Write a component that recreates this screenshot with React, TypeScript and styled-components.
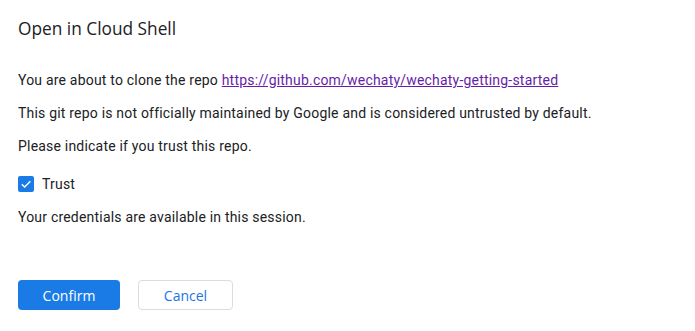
import React, { useState } from "react";
import styled, { createGlobalStyle } from "styled-components";

const Global = createGlobalStyle`
  html, body { margin: 0; padding: 0; background: #ffffff; }
  body { font-family: Roboto, "Liberation Sans", Arial, sans-serif; color: #202124; }
`;

const Dialog = styled.div`
  width: 695px;
  height: 331px;
  box-sizing: border-box;
  padding: 17px 18px 0 18px;
  display: flex;
  flex-direction: column;
`;

const Title = styled.h1`
  margin: 0;
  font-family: "Open Sans", Roboto, sans-serif;
  font-weight: 400;
  font-size: 17.3px;
  line-height: 24px;
  color: #202124;
`;

const Text = styled.p<{ $top: number }>`
  margin: ${(p) => p.$top}px 0 0 0;
  font-size: 14px;
  letter-spacing: 0.2px;
  line-height: 20px;
  color: #202124;
`;

const Link = styled.a`
  color: #681da8;
  text-decoration: underline;
`;

const CheckRow = styled.label`
  margin-top: 18px;
  display: flex;
  align-items: center;
  gap: 8px;
  height: 20px;
  font-size: 14px;
  letter-spacing: 0.2px;
  color: #202124;
  cursor: pointer;
`;

const Box = styled.span<{ $on: boolean }>`
  width: 16px;
  height: 16px;
  border-radius: 2px;
  box-sizing: border-box;
  background: ${(p) => (p.$on ? "#1a7be6" : "#fff")};
  border: ${(p) => (p.$on ? "none" : "2px solid #5f6368")};
  display: flex;
  align-items: center;
  justify-content: center;
`;

const Actions = styled.div`
  margin-top: 53px;
  display: flex;
  gap: 18px;
`;

const Button = styled.button<{ $primary?: boolean }>`
  height: 30px;
  box-sizing: border-box;
  border-radius: 4px;
  font-family: "Open Sans", Roboto, sans-serif;
  font-size: 14px;
  font-weight: 500;
  cursor: pointer;
  background: ${(p) => (p.$primary ? "#1a7be6" : "#ffffff")};
  color: ${(p) => (p.$primary ? "#ffffff" : "#1a73e8")};
  border: ${(p) => (p.$primary ? "none" : "1px solid #dadce0")};
  width: ${(p) => (p.$primary ? "102px" : "95px")};
`;

export default function App() {
  const [trust, setTrust] = useState(true);
  return (
    <>
      <Global />
      <Dialog>
        <Title>Open in Cloud Shell</Title>
        <Text $top={29}>
          You are about to clone the repo{" "}
          <Link href="#">https://github.com/wechaty/wechaty-getting-started</Link>
        </Text>
        <Text $top={13}>
          This git repo is not officially maintained by Google and is considered untrusted by default.
        </Text>
        <Text $top={13}>Please indicate if you trust this repo.</Text>
        <CheckRow onClick={() => setTrust(!trust)}>
          <Box $on={trust}>
            {trust && (
              <svg width="12" height="12" viewBox="0 0 12 12">
                <path d="M1.8 6.2 L4.6 9 L10.4 3.2" fill="none" stroke="#fff" strokeWidth="1.4" />
              </svg>
            )}
          </Box>
          Trust
        </CheckRow>
        <Text $top={13}>Your credentials are available in this session.</Text>
        <Actions>
          <Button $primary>Confirm</Button>
          <Button>Cancel</Button>
        </Actions>
      </Dialog>
    </>
  );
}
